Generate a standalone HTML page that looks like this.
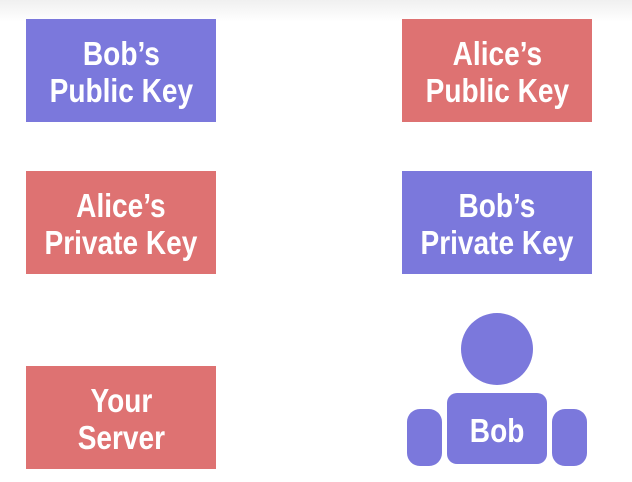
<!DOCTYPE html>
<html><head><meta charset="utf-8"><style>
html,body{margin:0;padding:0;}
body{width:632px;height:482px;position:relative;overflow:hidden;background:linear-gradient(#f0f0f0 0,#fff 22px,#fff 100%);font-family:"Liberation Sans",sans-serif;}
.b{position:absolute;width:190px;height:103px;display:flex;align-items:center;justify-content:center;text-align:center;color:#fff;font-weight:bold;font-size:33px;line-height:37px;box-sizing:border-box;padding-top:3px}
.b span{display:inline-block;transform:scaleX(0.85);white-space:nowrap}
.p{background:#7b78dc}.r{background:#de7272}
.s{position:absolute;background:#7b78dc}
</style></head><body>
<div class="b p" style="left:26px;top:19px"><span>Bob’s<br>Public Key</span></div>
<div class="b r" style="left:402px;top:19px"><span>Alice’s<br>Public Key</span></div>
<div class="b r" style="left:26px;top:171px"><span>Alice’s<br>Private Key</span></div>
<div class="b p" style="left:402px;top:171px"><span>Bob’s<br>Private Key</span></div>
<div class="b r" style="left:26px;top:366px"><span>Your<br>Server</span></div>
<div class="s" style="left:461px;top:313px;width:72px;height:72px;border-radius:50%"></div>
<div class="b" style="left:447px;top:393px;width:100px;height:71px;border-radius:10px;background:#7b78dc"><span>Bob</span></div>
<div class="s" style="left:407px;top:409px;width:35px;height:57px;border-radius:13px"></div>
<div class="s" style="left:552px;top:409px;width:35px;height:57px;border-radius:13px"></div>
</body></html>
